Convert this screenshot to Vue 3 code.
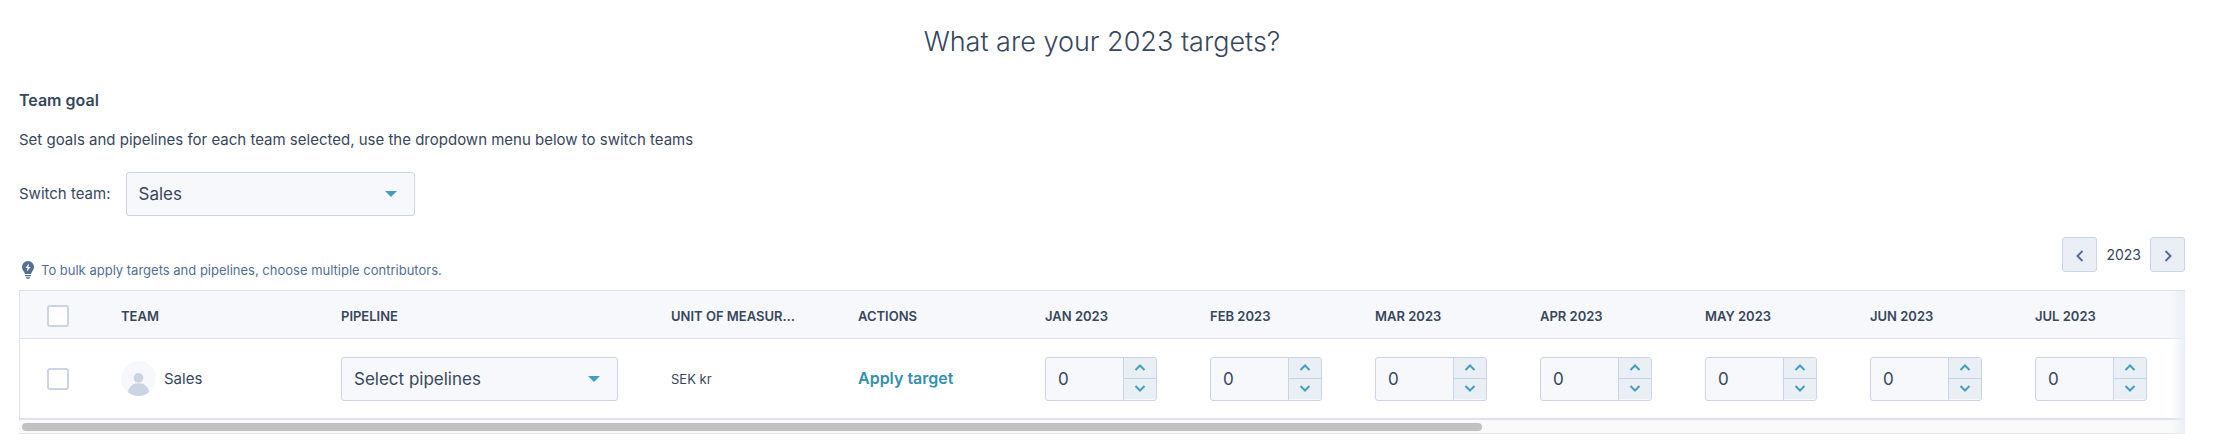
<template>
  <main class="targets">
    <h1>What are your {{ year }} targets?</h1>

    <h2>Team goal</h2>
    <p class="intro">Set goals and pipelines for each team selected, use the dropdown menu below to switch teams</p>

    <div class="switcher">
      <label for="team">Switch team:</label>
      <div class="select-wrap team-select">
        <select id="team" v-model="team" class="select">
          <option>Sales</option>
        </select>
        <svg class="caret" viewBox="0 0 12 6" aria-hidden="true"><path d="M0 0h12L6 6z" /></svg>
      </div>
    </div>

    <div class="toolbar">
      <p class="tip">
        <svg class="bulb" viewBox="0 0 12 18" aria-hidden="true">
          <path fill="#516f96" d="M6 0a6 6 0 0 0-6 6c0 2.400 1.300 3.700 2.200 5.200.4.700.5 1.800 1.300 1.800h5c.8 0 .9-1.100 1.300-1.800C10.700 9.700 12 8.400 12 6a6 6 0 0 0-6-6z" />
          <path fill="#fff" d="M7 2.500 3.300 7h2.200L4.800 10.500 8.700 6H6.400z" />
          <path fill="#516f96" d="M3 14h6v1.200H3zM4 16.300h4c-.3 1-1 1.700-2 1.700s-1.700-.7-2-1.700z" />
        </svg>
        To bulk apply targets and pipelines, choose multiple contributors.
      </p>
      <div class="year-nav">
        <button type="button" class="btn-year" aria-label="Previous year" @click="year--">
          <svg viewBox="0 0 8 12"><path d="M6.500 1 1.500 6l5 5" /></svg>
        </button>
        <span>{{ year }}</span>
        <button type="button" class="btn-year" aria-label="Next year" @click="year++">
          <svg viewBox="0 0 8 12"><path d="m1.500 1 5 5-5 5" /></svg>
        </button>
      </div>
    </div>

    <div class="table-wrap">
      <table>
        <colgroup>
          <col class="col-check" />
          <col class="col-team" />
          <col class="col-pipeline" />
          <col class="col-unit" />
          <col class="col-unit" />
          <col v-for="m in months.slice(1)" :key="m.name" class="col-month" />
          <col />
        </colgroup>
        <thead>
          <tr>
            <th><input v-model="allSelected" type="checkbox" aria-label="Select all teams" /></th>
            <th>TEAM</th>
            <th>PIPELINE</th>
            <th>UNIT OF MEASUR…</th>
            <th>ACTIONS</th>
            <th v-for="m in months" :key="m.name">{{ m.name }} {{ year }}</th>
          </tr>
        </thead>
        <tbody>
          <tr>
            <td><input v-model="selected" type="checkbox" aria-label="Select Sales" /></td>
            <td>
              <div class="team">
                <svg class="avatar" viewBox="0 0 36 36" aria-hidden="true">
                  <circle cx="18" cy="18" r="18" fill="#f6f8fb" />
                  <circle cx="18" cy="17.300" r="5" fill="#cbd4e4" />
                  <path fill="#cbd4e4" d="M7 32.200C8 26.500 12 23 18 23s10 3.500 11 9.200A18 18 0 0 1 18 36a18 18 0 0 1-11-3.800z" />
                </svg>
                Sales
              </div>
            </td>
            <td>
              <div class="select-wrap pipeline-select">
                <select v-model="pipeline" class="select" aria-label="Pipeline">
                  <option value="">Select pipelines</option>
                </select>
                <svg class="caret" viewBox="0 0 12 6" aria-hidden="true"><path d="M0 0h12L6 6z" /></svg>
              </div>
            </td>
            <td class="unit">SEK kr</td>
            <td><button type="button" class="btn-apply">Apply target</button></td>
            <td v-for="m in months" :key="m.name">
              <div class="stepper">
                <input v-model="m.target" type="text" inputmode="numeric" :aria-label="`${m.name} ${year}`" />
                <div class="steps">
                  <button type="button" aria-label="Increase" @click="step(m, 1)">
                    <svg viewBox="0 0 12 7"><path d="m1.500 6 4.500-4.500L10.500 6" /></svg>
                  </button>
                  <button type="button" aria-label="Decrease" @click="step(m, -1)">
                    <svg viewBox="0 0 12 7"><path d="M1.500 1 6 5.500 10.500 1" /></svg>
                  </button>
                </div>
              </div>
            </td>
          </tr>
        </tbody>
      </table>
      <div class="scroll-track"><div class="scroll-thumb"></div></div>
      <div class="edge-shade"></div>
    </div>
  </main>
</template>

<script setup>
import { ref, computed } from 'vue'

const year = ref(2023)
const team = ref('Sales')
const pipeline = ref('')
const selected = ref(false)
const months = ref(
  ['JAN', 'FEB', 'MAR', 'APR', 'MAY', 'JUN', 'JUL'].map(name => ({ name, target: '0' }))
)

const allSelected = computed({
  get: () => selected.value,
  set: value => { selected.value = value }
})

function step(month, amount) {
  month.target = String(Math.max(0, (Number(month.target) || 0) + amount))
}
</script>

<style>
body {
  margin: 0;
  background: #fff;
}
</style>

<style scoped>
.targets {
  padding: 22px 44px 0 19px;
  color: #36475d;
  font-family: Inter, "Liberation Sans", sans-serif;
  font-size: 15px;
  line-height: 24px;
}

h1 {
  margin: 0 0 26px;
  font-size: 27px;
  font-weight: 300;
  line-height: 40px;
  text-align: center;
}

h2 {
  margin: 0 0 16px;
  font-size: 16px;
  font-weight: 600;
  line-height: 24px;
}

p {
  margin: 0;
}

input,
select,
button {
  box-sizing: border-box;
  margin: 0;
  color: inherit;
  font-family: inherit;
}

button {
  cursor: pointer;
}

.switcher {
  display: flex;
  align-items: center;
  gap: 15px;
  margin: 20px 0 21px;
}

.select-wrap {
  position: relative;
}

.team-select {
  width: 289px;
}

.pipeline-select {
  width: 277px;
}

.select {
  display: block;
  width: 100%;
  height: 44px;
  padding: 0 40px 0 12px;
  border: 1px solid #cbd4e4;
  border-radius: 3px;
  background: #f6f8fb;
  font-size: 17px;
  appearance: none;
}

.caret {
  position: absolute;
  top: 19px;
  right: 18px;
  width: 12px;
  height: 6px;
  fill: #3ea2bd;
  pointer-events: none;
}

.toolbar {
  display: flex;
  justify-content: space-between;
  height: 43px;
  margin-bottom: 10px;
}

.tip {
  display: flex;
  align-items: center;
  align-self: flex-end;
  gap: 7px;
  padding-left: 3px;
  color: #516f96;
  font-size: 13px;
  line-height: 20px;
}

.bulb {
  width: 12px;
  height: 18px;
}

.year-nav {
  display: flex;
  align-items: center;
  align-self: flex-start;
  gap: 9px;
  font-size: 14px;
}

.btn-year {
  display: grid;
  place-items: center;
  width: 35px;
  height: 35px;
  padding: 2px 0 0;
  border: 1px solid #cbd4e4;
  border-radius: 3px;
  background: #eaeff6;
}

.btn-year svg {
  width: 8px;
  height: 12px;
  fill: none;
  stroke: #516f9a;
  stroke-width: 2;
}

.table-wrap {
  position: relative;
  overflow: hidden;
  border-top: 1px solid #dfe2eb;
}

table {
  width: 100%;
  min-width: 2154px;
  border-left: 1px solid #dfe2eb;
  border-spacing: 0;
  table-layout: fixed;
}

.col-check {
  width: 74px;
}

.col-team {
  width: 220px;
}

.col-pipeline {
  width: 330px;
}

.col-unit {
  width: 187px;
}

.col-month {
  width: 165px;
}

th,
td {
  padding: 0 0 0 27px;
  text-align: left;
  white-space: nowrap;
}

th {
  height: 45px;
  padding-top: 2px;
  border-bottom: 1px solid #dfe2eb;
  background: #f6f8fb;
  font-size: 13px;
  font-weight: 600;
}

td {
  height: 79px;
  border-bottom: 2px solid #dfe2eb;
}

input[type='checkbox'] {
  display: block;
  width: 22px;
  height: 22px;
  border: 2px solid #cbd4e4;
  border-radius: 3px;
  background: #fff;
  appearance: none;
}

input[type='checkbox']:checked {
  border-color: #3ea2bd;
  background: #3ea2bd;
}

.team {
  display: flex;
  align-items: center;
  gap: 8px;
}

.avatar {
  width: 35px;
  height: 35px;
}

.unit {
  font-size: 13px;
}

.btn-apply {
  padding: 0;
  border: 0;
  background: none;
  color: #3191ae;
  font-size: 16px;
  font-weight: 600;
}

.stepper {
  display: flex;
  box-sizing: border-box;
  width: 112px;
  height: 44px;
  overflow: hidden;
  border: 1px solid #cbd4e4;
  border-radius: 3px;
  background: #f6f8fb;
}

.stepper input {
  flex: 1;
  min-width: 0;
  padding: 0 0 0 12px;
  border: 0;
  background: none;
  font-size: 17px;
}

.steps {
  display: flex;
  flex-direction: column;
  width: 32px;
  padding-bottom: 1px;
  border-left: 1px solid #cbd4e4;
}

.steps button {
  display: grid;
  flex: 1;
  place-items: center;
  padding: 0;
  border: 0;
  background: #eaeff6;
}

.steps button + button {
  border-top: 1px solid #cbd4e4;
}

.steps svg {
  width: 12px;
  height: 7px;
  fill: none;
  stroke: #3ea2bd;
  stroke-width: 2;
}

.scroll-track {
  padding: 3px 3px 2px;
  border-bottom: 1px solid #e8e8e8;
  background: #fafafa;
}

.scroll-thumb {
  width: 67.6%;
  height: 8px;
  border-radius: 4px;
  background: #c1c1c1;
}

.edge-shade {
  position: absolute;
  top: 0;
  right: 0;
  bottom: 0;
  width: 14px;
  background: linear-gradient(to right, rgba(234, 239, 246, 0), #eaeff6);
  pointer-events: none;
}
</style>
